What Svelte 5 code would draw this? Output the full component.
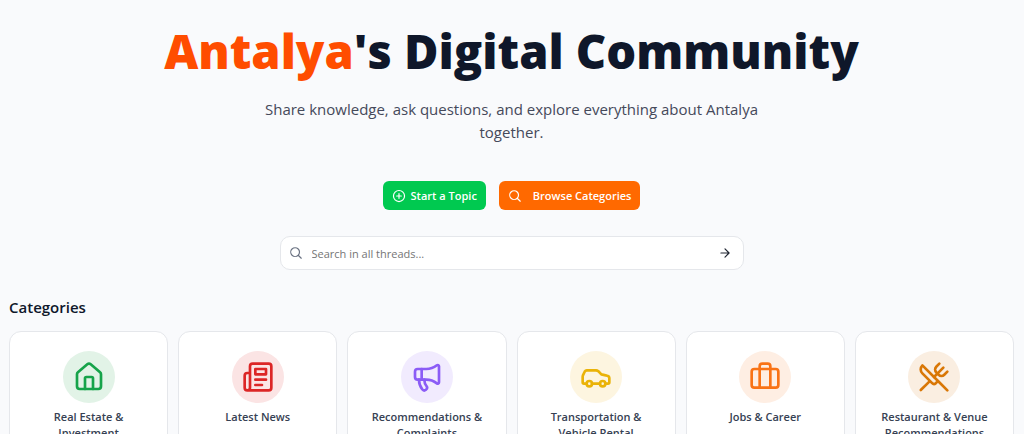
<script>
  let query = $state('');

  const categories = [
    { name: 'Real Estate & Investment', icon: 'house', color: '#16a34a', tint: '#e2f3e7' },
    { name: 'Latest News', icon: 'news', color: '#dc2626', tint: '#fbe4e4' },
    { name: 'Recommendations & Complaints', icon: 'megaphone', color: '#8b5cf6', tint: '#f1ebfe' },
    { name: 'Transportation & Vehicle Rental', icon: 'car', color: '#eab308', tint: '#fdf5e0' },
    { name: 'Jobs & Career', icon: 'briefcase', color: '#f97316', tint: '#feeee3' },
    { name: 'Restaurant & Venue Recommendations', icon: 'utensils', color: '#d97706', tint: '#faeee1' }
  ];

  const icons = {
    house: [
      'M15 21v-8a1 1 0 0 0-1-1h-4a1 1 0 0 0-1 1v8',
      'M3 10a2 2 0 0 1 .709-1.528l7-6a2 2 0 0 1 2.582 0l7 6A2 2 0 0 1 21 10v9a2 2 0 0 1-2 2H5a2 2 0 0 1-2-2z'
    ],
    news: [
      'M4 22h16a2 2 0 0 0 2-2V4a2 2 0 0 0-2-2H8a2 2 0 0 0-2 2v16a2 2 0 0 1-4 0v-9a2 2 0 0 1 2-2h2',
      'M18 14h-8',
      'M15 18h-5',
      'M10 6h8v4h-8z'
    ],
    megaphone: [
      'M11 6a13 13 0 0 0 8.4-2.8A1 1 0 0 1 21 4v12a1 1 0 0 1-1.6.8A13 13 0 0 0 11 14H5a2 2 0 0 1-2-2V8a2 2 0 0 1 2-2z',
      'M6 14a12 12 0 0 0 2.4 7.2 2 2 0 0 0 3.2-2.4A8 8 0 0 1 10 14',
      'M8 6v8'
    ],
    car: [
      'M19 17h2c.6 0 1-.4 1-1v-3c0-.9-.7-1.7-1.5-1.9C18.7 10.6 16 10 16 10s-1.3-1.4-2.2-2.3c-.5-.4-1.1-.7-1.8-.7H5c-.6 0-1.1.4-1.4.9l-1.4 2.9A3.7 3.7 0 0 0 2 12v4c0 .6.4 1 1 1h2',
      'M5 17a2 2 0 1 0 4 0a2 2 0 1 0-4 0',
      'M9 17h6',
      'M15 17a2 2 0 1 0 4 0a2 2 0 1 0-4 0'
    ],
    briefcase: [
      'M16 20V4a2 2 0 0 0-2-2h-4a2 2 0 0 0-2 2v16',
      'M4 6h16a2 2 0 0 1 2 2v10a2 2 0 0 1-2 2H4a2 2 0 0 1-2-2V8a2 2 0 0 1 2-2z'
    ],
    utensils: [
      'm16 2-2.3 2.3a3 3 0 0 0 0 4.2l1.8 1.8a3 3 0 0 0 4.2 0L22 8',
      'M15 15 3.3 3.3a4.2 4.2 0 0 0 0 6l7.3 7.3c.7.7 2 .7 2.8 0L15 15Zm0 0 7 7',
      'm2.1 21.8 6.4-6.3',
      'm19 5-7 7'
    ]
  };

  function handleSearch(event) {
    event.preventDefault();
    query = query.trim();
  }
</script>

{#snippet searchIcon()}
  <svg class="icon" viewBox="0 0 24 24" aria-hidden="true">
    <path d="m21 21-5.197-5.197m0 0A7.5 7.5 0 1 0 5.196 5.196a7.5 7.5 0 0 0 10.607 10.607Z" />
  </svg>
{/snippet}

<main class="page">
  <section class="hero">
    <h1><span class="accent">Antalya</span>'s Digital Community</h1>
    <p class="lead">Share knowledge, ask questions, and explore everything about Antalya together.</p>

    <div class="actions">
      <button type="button" class="btn green">
        <svg class="icon" viewBox="0 0 24 24" aria-hidden="true">
          <path d="M12 8v8m4-4H8m13.500 0a9.500 9.500 0 1 1-19 0 9.500 9.500 0 0 1 19 0Z" />
        </svg>
        Start a Topic
      </button>
      <button type="button" class="btn orange">
        {@render searchIcon()}
        Browse Categories
      </button>
    </div>

    <form class="search" onsubmit={handleSearch}>
      {@render searchIcon()}
      <input
        type="text"
        aria-label="Search in all threads"
        placeholder="Search in all threads..."
        bind:value={query}
      />
      <button type="submit" class="go" aria-label="Search">
        <svg class="icon" viewBox="0 0 24 24" aria-hidden="true">
          <path d="M5 12h14M12 5l7 7-7 7" />
        </svg>
      </button>
    </form>
  </section>

  <section class="categories">
    <h2>Categories</h2>
    <div class="grid">
      {#each categories as category}
        <a class="card" href="#{category.icon}">
          <span class="badge" style="color: {category.color}; background: {category.tint}">
            <svg viewBox="0 0 24 24" aria-hidden="true">
              {#each icons[category.icon] as d}
                <path {d} />
              {/each}
            </svg>
          </span>
          <span class="name">{category.name}</span>
        </a>
      {/each}
    </div>
  </section>
</main>

<style>
  :global(body) {
    margin: 0;
    background: #f9fafc;
  }

  .page {
    padding: 24px 10px 24px 9px;
    color: #0f172a;
    font-family: 'Segoe UI', 'Open Sans', 'Noto Sans', sans-serif;
  }

  .hero {
    display: flex;
    flex-direction: column;
    align-items: center;
    text-align: center;
  }

  h1 {
    margin: 0;
    font-size: 47px;
    font-weight: 800;
    line-height: 54px;
  }

  .accent {
    color: #ff4d00;
  }

  .lead {
    max-width: 520px;
    margin: 20px 0 0;
    color: #45495a;
    font-size: 15px;
    line-height: 23px;
  }

  .actions {
    display: flex;
    gap: 13px;
    margin-top: 37px;
  }

  .btn {
    display: flex;
    align-items: center;
    gap: 5px;
    height: 29px;
    padding: 0 9px;
    border: 0;
    border-radius: 6px;
    color: #fff;
    font: inherit;
    font-size: 11px;
    font-weight: 600;
    cursor: pointer;
  }

  .green {
    background: #00c950;
  }

  .orange {
    gap: 11px;
    background: #ff6900;
  }

  .icon {
    flex: none;
    width: 14px;
    height: 14px;
    fill: none;
    stroke: currentColor;
    stroke-width: 2;
    stroke-linecap: round;
    stroke-linejoin: round;
  }

  .search {
    display: flex;
    align-items: center;
    box-sizing: border-box;
    width: 100%;
    max-width: 464px;
    height: 34px;
    margin-top: 26px;
    padding: 0 11px 0 8px;
    border: 1px solid #e5e7eb;
    border-radius: 10px;
    background: #fff;
    color: #6a7282;
  }

  .search input {
    flex: 1;
    min-width: 0;
    padding: 0 9px;
    border: 0;
    outline: 0;
    background: none;
    color: #0f172a;
    font: inherit;
    font-size: 11px;
  }

  .search input::placeholder {
    color: #757575;
  }

  .go {
    display: flex;
    padding: 0;
    border: 0;
    background: none;
    color: #1e2430;
    cursor: pointer;
  }

  h2 {
    margin: 25px 0 12px;
    font-size: 15px;
    font-weight: 600;
    line-height: 24px;
  }

  .grid {
    display: grid;
    grid-template-columns: repeat(6, 1fr);
    gap: 10px;
  }

  .card {
    display: flex;
    flex-direction: column;
    align-items: center;
    gap: 6px;
    padding: 19px;
    border: 1px solid #e5e7eb;
    border-radius: 12px;
    background: #fff;
    color: #364153;
    text-align: center;
    text-decoration: none;
  }

  .badge {
    display: flex;
    align-items: center;
    justify-content: center;
    width: 52px;
    height: 52px;
    border-radius: 50%;
  }

  .badge svg {
    width: 32px;
    height: 32px;
    fill: none;
    stroke: currentColor;
    stroke-width: 2;
    stroke-linecap: round;
    stroke-linejoin: round;
  }

  .name {
    font-size: 11px;
    font-weight: 600;
    line-height: 16px;
  }

  @media (max-width: 768px) {
    .grid {
      grid-template-columns: repeat(2, 1fr);
    }
  }
</style>
